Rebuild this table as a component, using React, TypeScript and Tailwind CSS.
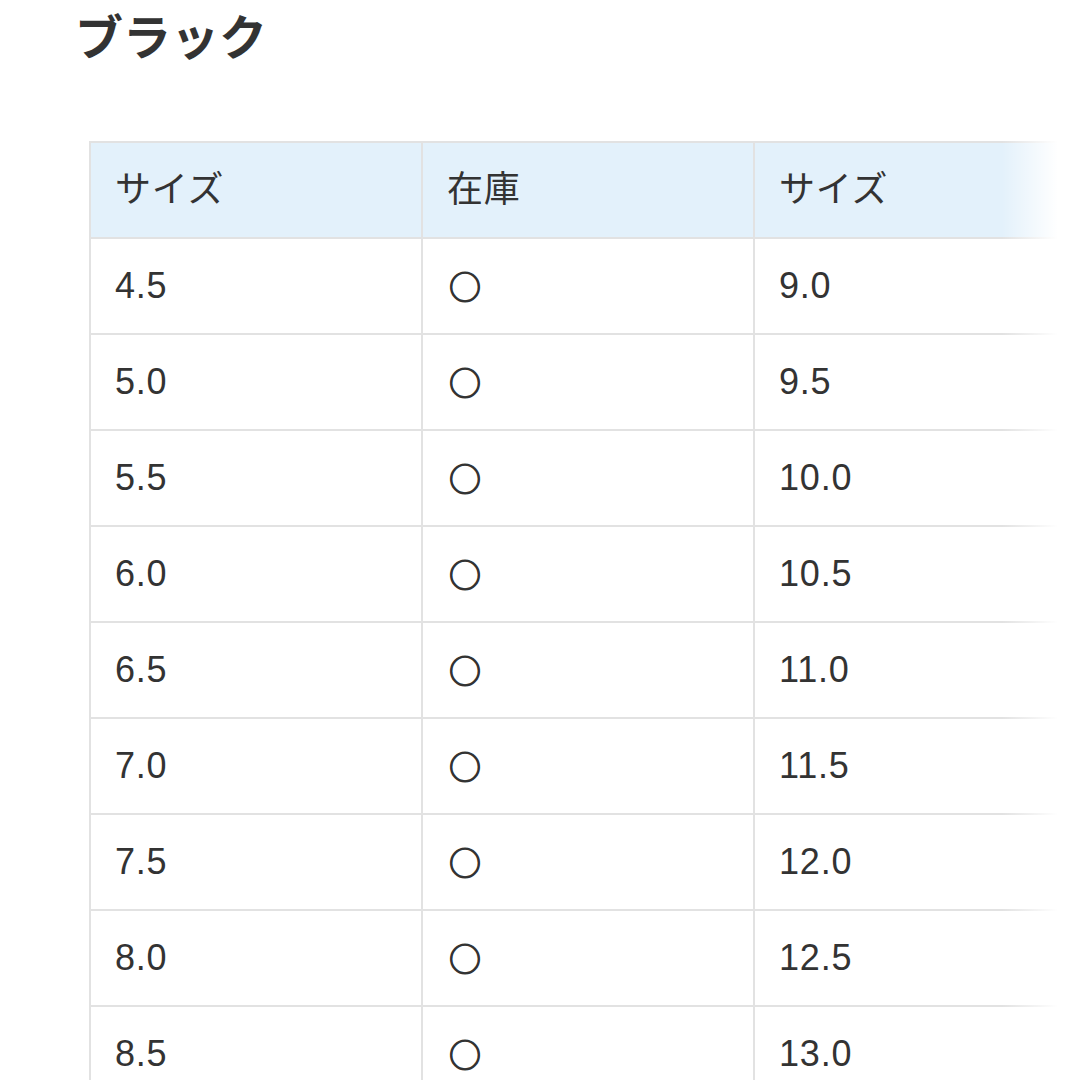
import React from "react"

const rows: [string, string, string][] = [
  ["4.5", "○", "9.0"],
  ["5.0", "○", "9.5"],
  ["5.5", "○", "10.0"],
  ["6.0", "○", "10.5"],
  ["6.5", "○", "11.0"],
  ["7.0", "○", "11.5"],
  ["7.5", "○", "12.0"],
  ["8.0", "○", "12.5"],
  ["8.5", "○", "13.0"],
]

const font = { fontFamily: '"Liberation Sans", "Noto Sans CJK JP", sans-serif' }
const cjk = { fontFamily: '"Noto Sans CJK JP", sans-serif' }

function Cell({ children, head }: { children: React.ReactNode; head?: boolean }) {
  return (
    <div
      className={`h-[96px] border-t-2 border-l-2 border-[#e2e2e2] flex items-center pl-[24px] text-[36px] tracking-[0.8px] text-[#333] ${
        head ? "bg-[#e3f1fb]" : "bg-white"
      }`}
    >
      {children}
    </div>
  )
}

export default function App() {
  return (
    <div className="relative w-[1080px] h-[1080px] overflow-hidden bg-white" style={font}>
      <h2 className="pl-[75px] pt-[15px] text-[48px] font-bold leading-none text-[#333]">ブラック</h2>
      <div className="relative mt-[78px] ml-[89px] w-[1100px]">
        <div className="grid grid-cols-[332px_332px_332px]">
          <Cell head>サイズ</Cell>
          <Cell head>在庫</Cell>
          <Cell head>サイズ</Cell>
          {rows.map(([a, b, c]) => (
            <React.Fragment key={a}>
              <Cell>{a}</Cell>
              <Cell>
                {/* glyph is hairline in Noto, stroke it to match the heavier circle */}
                <span
                  className="pl-[2px] text-[32px] leading-none -mt-[3px] [-webkit-text-stroke:1.2px_#333]"
                  style={cjk}
                >
                  {b}
                </span>
              </Cell>
              <Cell>{c}</Cell>
            </React.Fragment>
          ))}
        </div>
      </div>
      <div className="absolute top-0 bottom-0 left-[1002px] w-[56px] bg-linear-to-r from-white/0 to-white" />
      <div className="absolute top-0 bottom-0 left-[1057px] right-0 bg-white" />
    </div>
  )
}
